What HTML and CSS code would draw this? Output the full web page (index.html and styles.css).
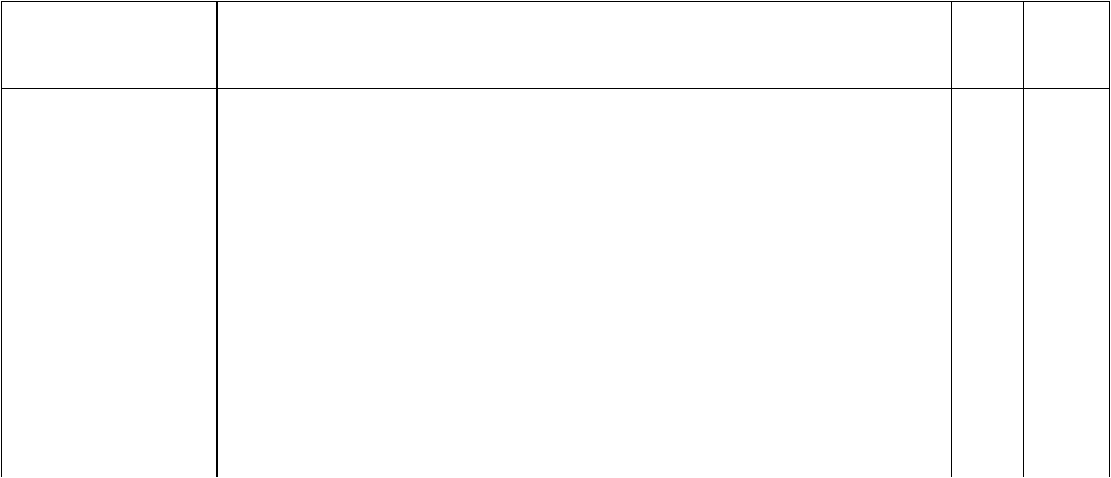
FILE: index.html
```html
<!DOCTYPE html>
<html lang="en">
  <head>
    <meta charset="UTF-8" />
    <meta name="viewport" content="width=device-width, initial-scale=1.0" />
    <title>Table</title>
    <link rel="stylesheet" href="styles.css">
  </head>
  <body>
    <div class="sheet">
      <div class="cell head first"></div>
      <div class="cell head"></div>
      <div class="cell head"></div>
      <div class="cell head last"></div>

      <div class="cell body first"></div>
      <div class="cell body"></div>
      <div class="cell body"></div>
      <div class="cell body last"></div>
    </div>
  </body>
</html>
```

FILE: styles.css
```css
* {
  box-sizing: border-box;
  margin: 0;
  padding: 0;
}

body {
  background: #fff;
  font-family: "Liberation Sans", Arial, sans-serif;
  height: 100vh;
  overflow: hidden;
}

.sheet {
  display: grid;
  grid-template-columns: 216px 734px 72px 85px;
  grid-template-rows: 87px 388px;
  width: 1109px;
  margin: 1px 0 0 1px;
  border-top: 1px solid #000;
  border-left: 1px solid #000;
  border-right: 1px solid #000;
}

.cell {
  border-right: 1px solid #000;
}

.cell.first {
  border-right-width: 2px;
}

.cell.last {
  border-right: none;
}

.cell.head {
  border-bottom: 1px solid #000;
}
```
